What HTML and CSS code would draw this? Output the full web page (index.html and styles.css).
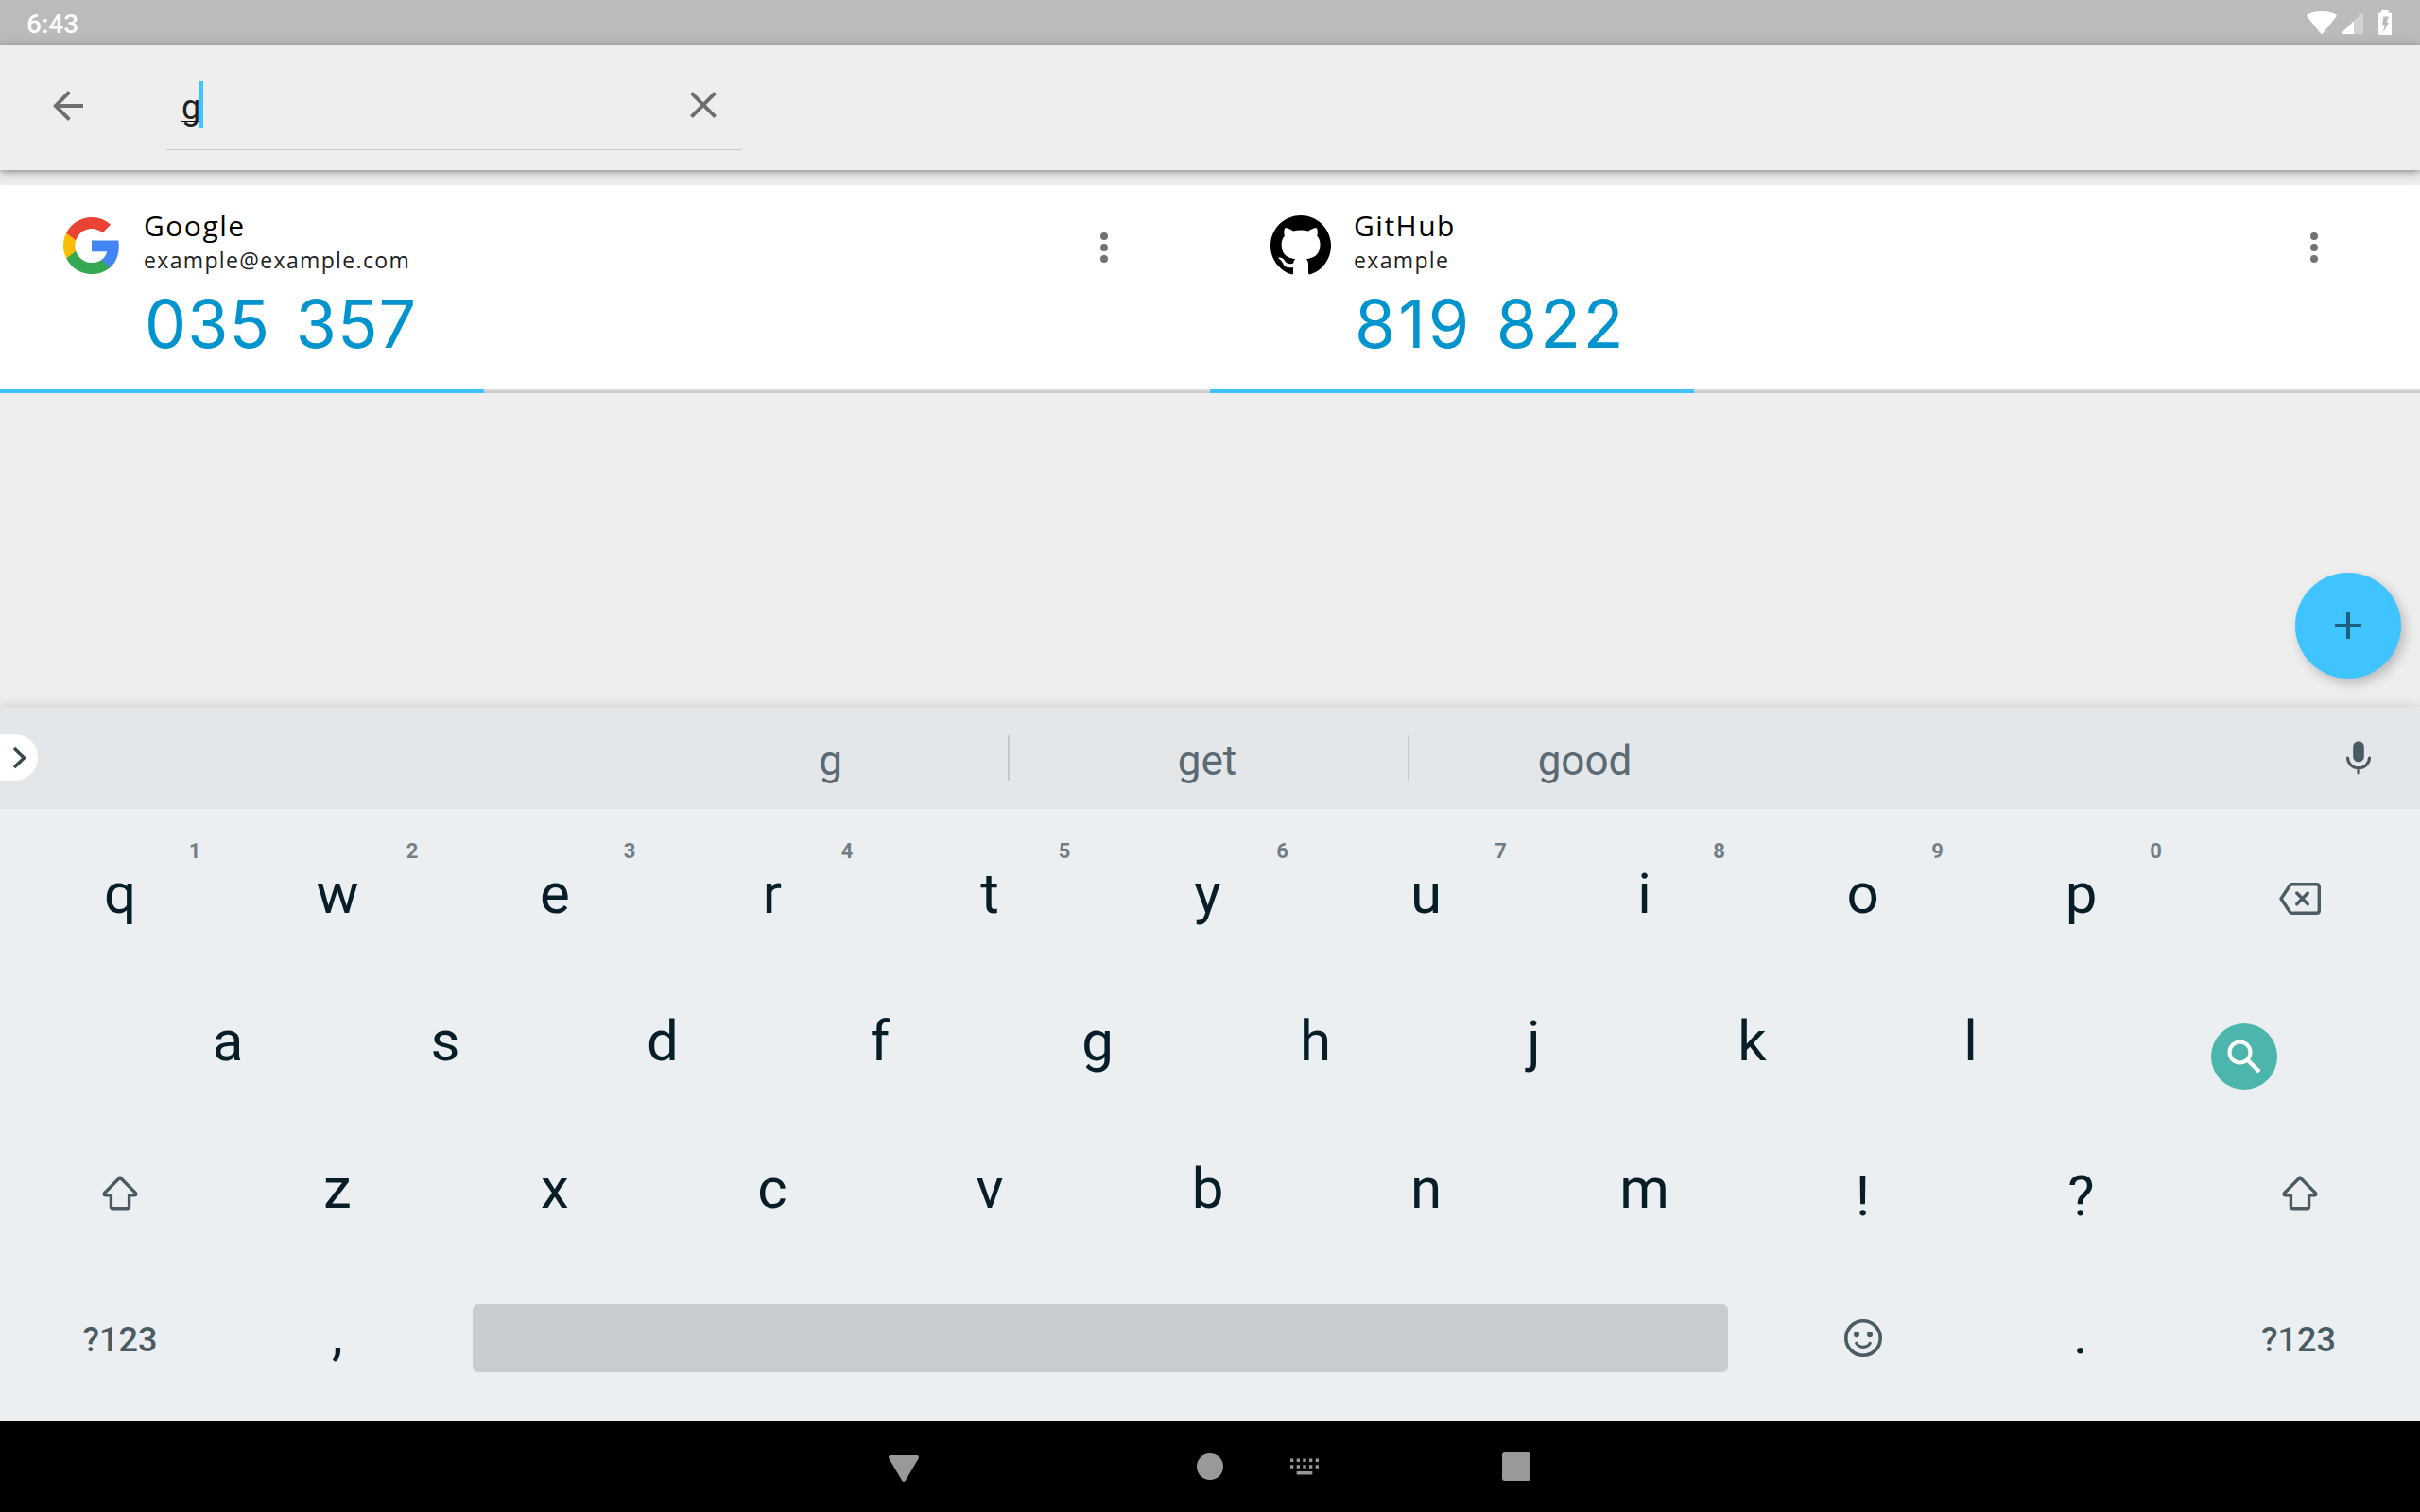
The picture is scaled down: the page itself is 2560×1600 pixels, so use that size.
FILE: index.html
```html
<!DOCTYPE html>
<html lang="en">
<head>
<meta charset="utf-8">
<title>Search</title>
<link rel="stylesheet" href="styles.css">
</head>
<body>
<header class="status">
  <span class="clock">6:43</span>
  <svg class="status-icons" width="96" height="48" viewBox="0 0 96 48">
    <path d="M22.800 35.200 8.500 17.500Q7.600 16 9 15.200Q15 12 24 12Q33 12 39 15.200Q40.400 16 39.500 17.500L25.400 35.200Q24 37 22.800 35.200Z" fill="#fff"/>
    <path d="M46.500 36Q44.700 35.500 46 34L66 14.500Q68 13.500 68 15V34.500Q68 36 66.500 36Z" fill="#d2d2d2"/>
    <path d="M46.500 36Q44.700 35.500 46 34L58 22.300V36Z" fill="#fff"/>
    <path d="M87 11h7.600v2.400h2.200q1.200 0 1.200 1.200V35.700q0 1.300-1.200 1.300H85.200Q84 37 84 35.700V14.600q0-1.200 1.200-1.200H87ZM89.400 17.500 88 26.300h2.500L89.200 34 95 23.700H92.600L95 17.500Z" fill="#fff" fill-rule="evenodd"/>
  </svg>
</header>

<section class="toolbar">
  <svg class="back" width="48" height="48" viewBox="0 0 24 24"><path d="M20 11H7.830l5.590-5.590L12 4l-8 8 8 8 1.410-1.410L7.830 13H20z"/></svg>
  <div class="search">
    <span class="query">g</span><span class="caret"></span>
    <svg class="clear" width="48" height="48" viewBox="0 0 24 24"><path d="M19 6.410 17.590 5 12 10.590 6.410 5 5 6.410 10.590 12 5 17.590 6.410 19 12 13.410 17.590 19 19 17.590 13.410 12z"/></svg>
  </div>
</section>

<main class="content">
  <div class="cards">
    <article class="card">
      <div class="card-body">
        <svg class="logo" width="60" height="60" viewBox="1 1 22 22">
          <path fill="#4285f4" d="M22.560 12.250c0-.78-.07-1.530-.2-2.250H12v4.260h5.920c-.26 1.370-1.040 2.530-2.210 3.310v2.770h3.570c2.080-1.920 3.280-4.740 3.280-8.090z"/>
          <path fill="#34a853" d="M12 23c2.970 0 5.460-.98 7.280-2.660l-3.570-2.770c-.98.66-2.230 1.060-3.710 1.060-2.860 0-5.290-1.930-6.160-4.530H2.180v2.840C3.990 20.530 7.700 23 12 23z"/>
          <path fill="#fbbc05" d="M5.840 14.090c-.22-.66-.35-1.360-.35-2.090s.13-1.430.35-2.090V7.070H2.180C1.430 8.550 1 10.220 1 12s.43 3.450 1.180 4.930l3.660-2.840z"/>
          <path fill="#ea4335" d="M12 5.380c1.620 0 3.060.56 4.210 1.640l3.150-3.150C17.450 2.090 14.970 1 12 1 7.700 1 3.990 3.470 2.180 7.070l3.660 2.840c.87-2.600 3.300-4.530 6.160-4.530z"/>
        </svg>
        <div class="entry">
          <div class="issuer">Google</div>
          <div class="account">example@example.com</div>
          <div class="code">035 357</div>
        </div>
        <svg class="more" width="8" height="32" viewBox="0 0 8 32"><circle cx="4" cy="4" r="4"/><circle cx="4" cy="16" r="4"/><circle cx="4" cy="28" r="4"/></svg>
      </div>
      <div class="progress"><div class="progress-fill"></div></div>
    </article>
    <article class="card">
      <div class="card-body">
        <svg class="logo" width="64" height="64" viewBox="0 0 16 16"><path fill="#000" d="M8 0C3.580 0 0 3.580 0 8c0 3.540 2.290 6.530 5.470 7.590.4.070.55-.17.55-.38 0-.19-.01-.82-.01-1.490-2.010.37-2.530-.49-2.690-.94-.09-.23-.48-.94-.82-1.130-.28-.15-.68-.52-.01-.53.63-.01 1.080.58 1.230.82.72 1.210 1.870.87 2.330.66.07-.52.28-.87.51-1.070-1.780-.2-3.640-.89-3.640-3.950 0-.87.31-1.590.82-2.150-.08-.2-.36-1.020.08-2.120 0 0 .67-.21 2.200.82.640-.18 1.320-.27 2-.27s1.360.09 2 .27c1.530-1.040 2.200-.82 2.200-.82.44 1.100.16 1.920.08 2.120.51.56.82 1.270.82 2.150 0 3.070-1.870 3.750-3.650 3.950.29.25.54.73.54 1.480 0 1.070-.01 1.930-.01 2.200 0 .21.15.46.55.38A8.010 8.010 0 0 0 16 8c0-4.420-3.580-8-8-8z"/></svg>
        <div class="entry">
          <div class="issuer">GitHub</div>
          <div class="account">example</div>
          <div class="code code-loose">819 822</div>
        </div>
        <svg class="more" width="8" height="32" viewBox="0 0 8 32"><circle cx="4" cy="4" r="4"/><circle cx="4" cy="16" r="4"/><circle cx="4" cy="28" r="4"/></svg>
      </div>
      <div class="progress"><div class="progress-fill"></div></div>
    </article>
  </div>
  <button class="fab"><svg width="28" height="28" viewBox="0 0 28 28"><path d="M12 0h4v12h12v4H16v12h-4V16H0v-4h12z"/></svg></button>
</main>

<section class="keyboard">
  <div class="suggestions">
    <div class="expand"><svg width="15" height="24" viewBox="0 0 15 24"><path d="M2 2 12.500 12 2 22" fill="none" stroke="#37474f" stroke-width="3.600"/></svg></div>
    <div class="words"><span>g</span><span>get</span><span>good</span></div>
    <svg class="mic" width="26" height="36" viewBox="0 0 26 36"><rect x="7.200" y="0.200" width="11.600" height="22.300" rx="5.800" fill="#4a5b63"/><path d="M1.500 18A11.500 10.700 0 0 0 24.500 18M13 28.500V34" fill="none" stroke="#4a5b63" stroke-width="3.200" stroke-linecap="round"/></svg>
  </div>
  <div class="keys">
    <div class="row">
      <span class="key">q<sup>1</sup></span><span class="key">w<sup>2</sup></span><span class="key">e<sup>3</sup></span><span class="key">r<sup>4</sup></span><span class="key">t<sup>5</sup></span><span class="key">y<sup>6</sup></span><span class="key">u<sup>7</sup></span><span class="key">i<sup>8</sup></span><span class="key">o<sup>9</sup></span><span class="key">p<sup>0</sup></span>
      <span class="key icon"><svg class="delete" width="44" height="34" viewBox="0 0 44 34"><path d="M13.500 1.700H39.500Q42.300 1.700 42.300 4.500V29.500Q42.300 32.300 39.500 32.300H13.500Q12.300 32.300 11.500 31.200L2 17 11.500 2.800Q12.300 1.700 13.500 1.700Z"/><path d="M18.700 11 30.300 22.800M30.300 11 18.700 22.800" stroke-linecap="round"/></svg></span>
    </div>
    <div class="row middle">
      <span class="key">a</span><span class="key">s</span><span class="key">d</span><span class="key">f</span><span class="key">g</span><span class="key">h</span><span class="key">j</span><span class="key">k</span><span class="key">l</span>
      <span class="key wide"><span class="go"><svg width="36" height="36" viewBox="0 0 36 36"><circle cx="13.500" cy="13.500" r="11" fill="none" stroke="#fff" stroke-width="4"/><path d="M22.500 22.500 34 34" stroke="#fff" stroke-width="4.400"/></svg></span></span>
    </div>
    <div class="row">
      <span class="key icon"><svg class="shift" width="40" height="38" viewBox="0 0 40 38"><path d="M20 3 36.200 19.300Q37.800 21.700 35.600 21.700H29.600V33.500Q29.600 35.800 27.300 35.800H12.700Q10.400 35.800 10.400 33.500V21.700H4.400Q2.200 21.700 3.800 19.300Z"/></svg></span>
      <span class="key">z</span><span class="key">x</span><span class="key">c</span><span class="key">v</span><span class="key">b</span><span class="key">n</span><span class="key">m</span><span class="key mark">!</span><span class="key mark">?</span>
      <span class="key icon"><svg class="shift" width="40" height="38" viewBox="0 0 40 38"><path d="M20 3 36.200 19.300Q37.800 21.700 35.600 21.700H29.600V33.500Q29.600 35.800 27.300 35.800H12.700Q10.400 35.800 10.400 33.500V21.700H4.400Q2.200 21.700 3.800 19.300Z"/></svg></span>
    </div>
    <div class="row">
      <span class="key mode">?123</span><span class="key punct">,</span>
      <span class="key space"><span class="bar"></span></span>
      <span class="key icon"><svg class="smile" width="40" height="40" viewBox="0 0 40 40"><circle cx="20" cy="20" r="18.200" fill="none" stroke="#4a5b63" stroke-width="3.600"/><circle cx="13" cy="16.200" r="3"/><circle cx="27" cy="16.200" r="3"/><path d="M12.700 25.300Q15 29.300 20 29.300T27.300 25.300" fill="none" stroke="#4a5b63" stroke-width="3.200" stroke-linecap="round"/></svg></span>
      <span class="key punct">.</span><span class="key mode">?123</span>
    </div>
  </div>
</section>

<nav class="navbar">
  <svg width="32" height="28" viewBox="0 0 32 28"><path d="M2 0H30Q33 .5 31.500 3.500L18 26.500Q16 29.500 14 26.500L.5 3.500Q-1 .5 2 0Z"/></svg>
  <svg class="home" width="28" height="28" viewBox="0 0 28 28"><circle cx="14" cy="14" r="14"/></svg>
  <svg class="ime" width="30" height="18" viewBox="0 0 30 18"><path d="M0 .5h3.300v3.600H0zM6.700.5h3.300v3.600H6.700zM13.300.5h3.300v3.600h-3.300zM20 .5h3.300v3.600H20zM26.700.5H30v3.600h-3.300zM0 7.200h3.300v3.600H0zM6.700 7.200h3.300v3.600H6.700zM13.300 7.200h3.300v3.600h-3.300zM20 7.200h3.300v3.600H20zM26.700 7.200H30v3.600h-3.300zM6.700 14h16.600v3.400H6.700z"/></svg>
  <svg width="30" height="30" viewBox="0 0 30 30"><rect width="30" height="30" rx="3"/></svg>
</nav>
</body>
</html>
```
FILE: styles.css
```css
* { box-sizing: border-box; }

body {
  margin: 0;
  width: 2560px;
  height: 1600px;
  overflow: hidden;
  display: flex;
  flex-direction: column;
  background: #eee;
  font-family: Roboto, sans-serif;
}

svg { display: block; flex: none; }

/* Status bar */
.status {
  height: 48px;
  flex: none;
  display: flex;
  justify-content: space-between;
  padding: 0 32px 0 28px;
  background: #bbb;
}
.clock {
  padding-top: 1px;
  font-size: 28px;
  font-weight: 500;
  line-height: 50px;
  color: #fff;
}
.status-icons { overflow: visible; }

/* Search toolbar */
.toolbar {
  position: relative;
  z-index: 1;
  height: 132px;
  flex: none;
  display: flex;
  padding: 0 48px;
  background: #eee;
  box-shadow: 0 2px 12px rgba(0, 0, 0, .25), 0 2px 5px rgba(0, 0, 0, .22);
}
.back { margin-top: 40px; fill: #6e6e6e; }
.search {
  width: 608px;
  height: 111px;
  margin-left: 80px;
  padding: 38px 16px 0;
  display: flex;
  align-items: flex-start;
  border-bottom: 1px solid #c8c8c8;
}
.query {
  margin-top: 3px;
  height: 40px;
  font-size: 36px;
  line-height: 50px;
  color: #212121;
  border-bottom: 1px solid #000;
}
.caret { width: 4px; height: 49px; margin-left: -1px; background: #40c4ff; }
.clear { margin: 1px 0 0 auto; fill: #6e6e6e; }

/* Account cards */
.content {
  position: relative;
  height: 568px;
  flex: none;
  padding-top: 16px;
}
.cards { display: grid; grid-template-columns: 1fr 1fr; }
.card { height: 220px; display: flex; flex-direction: column; background: #fff; }
.card-body { flex: 1; display: flex; align-items: flex-start; padding: 32px 108px 0 64px; }
.logo { width: 64px; height: 64px; padding: 0; }
.card:first-child .logo { width: 60px; height: 60px; margin: 2px 1px 2px 3px; }
.entry { flex: 1; margin-left: 24px; font-family: "Open Sans", sans-serif; white-space: nowrap; }
.issuer {
  margin-top: -9px;
  height: 40px;
  font-size: 30px;
  line-height: 40px;
  letter-spacing: 1.500px;
  color: #000;
}
.account {
  height: 32px;
  font-size: 23px;
  line-height: 32px;
  letter-spacing: 1.350px;
  color: #212121;
}
.code {
  height: 84px;
  padding: 10px 0 0 1px;
  font-family: Inter, sans-serif;
  font-size: 70px;
  line-height: 84px;
  letter-spacing: 1px;
  word-spacing: 6px;
  color: #0094cf;
}
.code-loose { letter-spacing: 3px; word-spacing: 3px; }
.more { margin-top: 18px; fill: #737373; }
.progress { height: 4px; background: linear-gradient(#dcdcdc 50%, #c8c8c8 50%); }
.progress-fill { width: 40%; height: 4px; background: #40c4ff; }

.fab {
  position: absolute;
  right: 20px;
  bottom: 30px;
  width: 112px;
  height: 112px;
  display: flex;
  align-items: center;
  justify-content: center;
  border: 0;
  border-radius: 50%;
  background: #40c4ff;
  box-shadow: 4px 5px 12px rgba(0, 0, 0, .22);
}
.fab svg { fill: #1d5f7c; }

/* Keyboard */
.keyboard {
  position: relative;
  height: 756px;
  flex: none;
  background: #ebeff2;
  box-shadow: 0 0 12px rgba(0, 0, 0, .16);
}
.suggestions {
  height: 108px;
  display: flex;
  align-items: center;
  justify-content: space-between;
  padding-right: 52px;
  background: #e3e7ea;
}
.expand {
  width: 40px;
  height: 49px;
  display: flex;
  align-items: center;
  margin-bottom: 1px;
  padding-left: 13px;
  border-radius: 0 24px 24px 0;
  background: #fff;
}
.words {
  display: grid;
  grid-template-columns: 378px 423px 374px;
  margin: 0 0 1px 28px;
  font-size: 44px;
  line-height: 49px;
  text-align: center;
  color: #5b6a72;
}
.words span { height: 48px; padding-top: 3px; }
.words span:first-child { padding-left: 4px; }
.words span + span { padding-right: 2px; border-left: 2px solid #c4cacd; }
.words span:last-child { padding-right: 0; }
.keys { padding: 16px 12px 8px; }
.row { height: 156px; display: flex; }
.row.middle { padding-left: 114px; }
.key {
  position: relative;
  width: 230px;
  flex: none;
  display: flex;
  align-items: center;
  justify-content: center;
  padding-bottom: 9px;
  font-size: 60px;
  line-height: 70px;
  color: #071e28;
}
.key:nth-child(n+6) { width: 231px; }
.key sup {
  position: absolute;
  left: 50%;
  top: 15px;
  width: 60px;
  margin-left: 49px;
  font-size: 22px;
  font-weight: 700;
  line-height: 28px;
  text-align: center;
  color: #727e84;
}
.icon, .mode { padding: 0; }
.mode { font-size: 36px; font-weight: 500; color: #4a5b63; }
.mark { padding: 7px 0 0; }
.punct { padding-bottom: 13px; }
.key.wide { padding: 24px 0 0 0; width: 347px; }
.go {
  width: 70px;
  height: 70px;
  display: flex;
  align-items: center;
  justify-content: center;
  border-radius: 50%;
  background: #4db6ac;
}
.delete, .shift { fill: none; stroke: #4a5b63; stroke-width: 3.400px; stroke-linejoin: round; }
.delete { margin-top: 2px; }
.smile { margin-bottom: 4px; fill: #4a5b63; }
.space { width: 1384px; padding: 0 0 4px; }
.bar { width: 1328px; height: 72px; border-radius: 6px; background: #c9cdd0; }

/* Navigation bar */
.navbar {
  height: 96px;
  flex: none;
  display: flex;
  align-items: center;
  padding-left: 940px;
  background: #000;
  fill: #999;
}
.navbar svg:first-child { margin-top: 4px; }
.navbar .home { margin-left: 294px; }
.navbar .ime { margin-left: 71px; margin-right: 194px; }
```
